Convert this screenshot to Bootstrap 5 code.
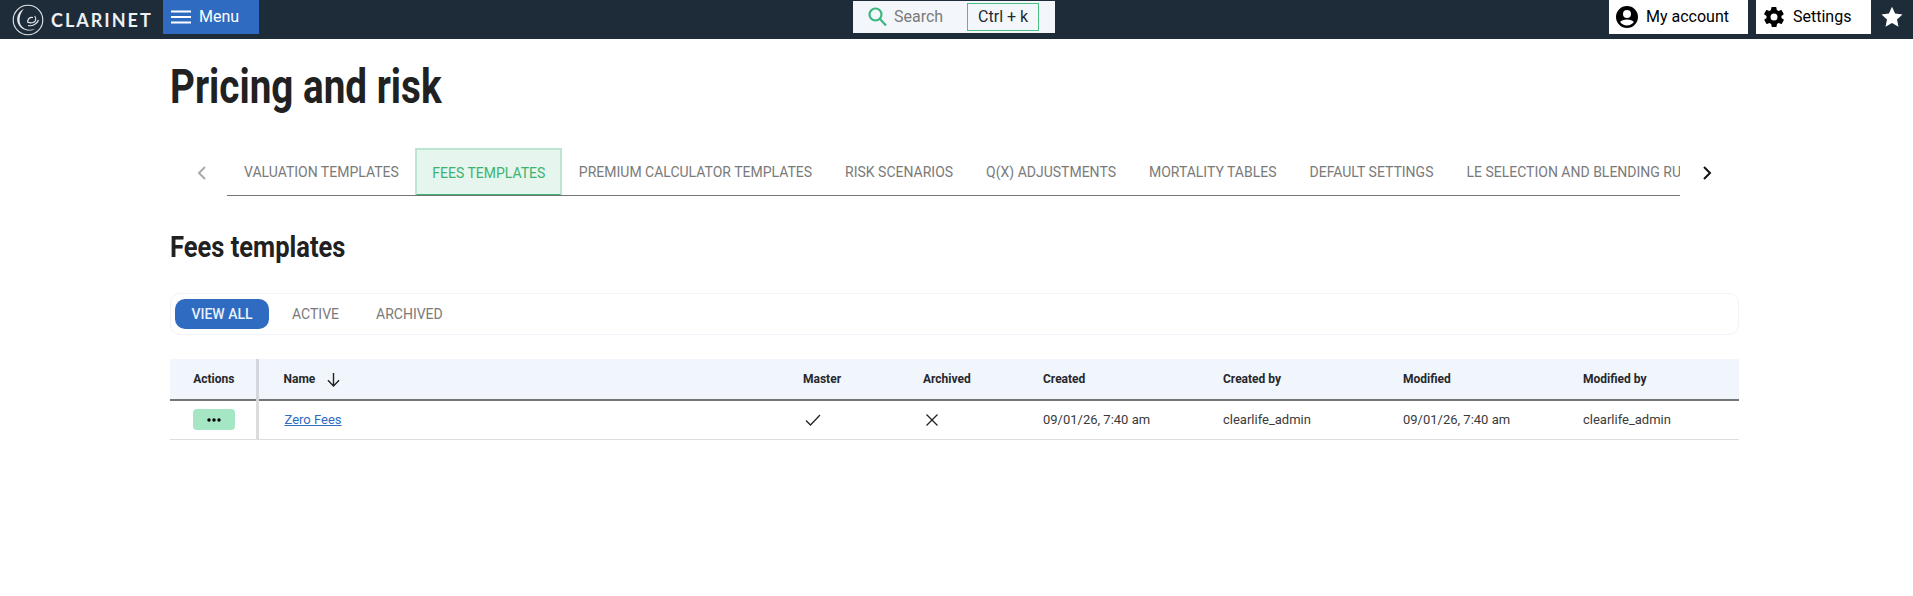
<!DOCTYPE html>
<html lang="en">
<head>
<meta charset="utf-8">
<title>Pricing and risk</title>
<link href="https://cdn.jsdelivr.net/npm/bootstrap@5.3.0/dist/css/bootstrap.min.css" rel="stylesheet">
<style>
body{font-family:Roboto,"Liberation Sans",sans-serif;background:#fff;color:#212121;overflow:hidden}
.topbar{height:39px;background:#1e2c3a}
.brand-box{width:163px;height:39px;padding-left:12px;color:#eef0f2}
.brand-word{font-family:Lato,"Liberation Sans",sans-serif;font-size:18px;font-weight:700;letter-spacing:2px;margin-left:7px;line-height:1}
.menu-btn{width:96px;height:34px;background:#2f6bc1;color:#fff;font-size:16px;padding:0 0 0 8px;border-radius:0;border:0;gap:8px}
.search-box{width:202px;height:32px;background:#f3f7fb;margin-left:594px;padding-left:15px;color:#7a7a7a;font-size:16px;margin-top:1px}
.search-word{margin-left:7px}
.kbd-box{width:72px;height:28px;border:1px solid #4cbf85;color:#212b36;font-size:16px;margin-left:24px}
.top-white{height:34px;background:#fff;color:#000;font-size:16px;padding-left:6px;border:0;border-radius:0;gap:7px}
.acct{width:139px}.sett{width:115px;margin-left:8px}
.star-wrap{width:42px;height:34px}
.main-wrap{padding:0 174px 0 170px}
.page-title{font-size:48px;font-weight:700;line-height:56px;margin:0;padding-top:20px;height:125px;transform:scaleX(.805);transform-origin:left top;white-space:nowrap;color:#212121}
.tabs-row{height:48px;margin-top:-16px}
.chev{width:57px;height:48px;padding-top:2px;padding-left:27px}
.chev-r{width:59px;height:48px;padding-left:22px;padding-top:2px}
.tab-strip{width:1453px;height:48px;overflow:hidden;border-bottom:1px solid #757575;flex-wrap:nowrap;padding-left:.5px}
.tab-one{height:47px;line-height:48px;padding:0 16.5px;font-size:14px;color:#7a7a7a;white-space:nowrap;text-decoration:none}
.tab-one.on{background:#e6f5ee;color:#3cb371;border:2px solid #bce6d0;border-bottom:2px solid #3cb371;padding:0 15px;height:48px;line-height:46px}
.sub-title{font-size:30px;font-weight:700;line-height:38px;margin:32px 0 0;transform:scaleX(.85);transform-origin:left top;white-space:nowrap}
.filter-bar{height:42px;border:1px solid #f0f3f9;border-radius:10px;margin-top:27px;padding-left:4px}
.pill-on{width:94px;height:30px;line-height:30px;background:#2f6bc1;color:#e8f0fb;border-radius:10px;font-size:14px;font-weight:500;text-align:center}
.pill-off{font-size:14px;color:#7a7a7a;margin-left:23px}
.pill-off + .pill-off{margin-left:37px}
.grid-t{table-layout:fixed;width:1569px;margin:24px 0 0;border-collapse:collapse}
.grid-t th{background:#f1f5fc;height:41px;font-size:12px;font-weight:700;color:#25282c;padding:0;border-bottom:2px solid #757575;vertical-align:middle}
.grid-t td{height:39px;font-size:13px;color:#3a3a3a;padding:0;border-bottom:1px solid #dedede;vertical-align:middle}
.grid-t .cell-act{text-align:center;border-right:3px solid #d3d6df;padding-left:2px}
.grid-t td.cell-act{border-right-color:#dcdcdc}
.grid-t .cell-name{padding-left:25px}
.act-btn{width:42px;height:21px;background:#a5e6c5;border-radius:4px;border:0;padding:0;line-height:1;vertical-align:middle}
.rec-link{color:#2f6bc1;margin-left:1px}
.mark-ic{margin-left:2px;margin-bottom:2px}
</style>
</head>
<body>
<nav class="topbar d-flex align-items-start">
  <div class="brand-box d-flex align-items-center">
    <svg width="32" height="32" viewBox="0 0 32 32" fill="none" stroke="#e4e7ea">
      <circle cx="16" cy="16" r="14.8" stroke-width="1.100"/>
      <path d="M12 5C6 7.500 3.800 14 6 19.500c2.800 6.500 11 9 17 5.500-6 1.800-12 .5-14.500-4.500C6.500 15.500 8 9 12 5z" fill="#e4e7ea" stroke="none"/>
      <path d="M21 13.500c-3-.5-5 1.500-5.500 4.500 3 1.500 7 1 8-1.500.6-1.800 0-3.500-.8-4.500" stroke-width="1.200"/>
      <path d="M16 21.500c4 1 9-1 10.500-5.500" stroke-width="1.200"/>
    </svg>
    <span class="brand-word">CLARINET</span>
  </div>
  <button class="menu-btn d-flex align-items-center" type="button">
    <svg width="20" height="14" viewBox="0 0 20 14"><path d="M0 1.500h20M0 7h20M0 12.500h20" stroke="#fff" stroke-width="2"/></svg>
    <span>Menu</span>
  </button>
  <div class="flex-grow-1 d-flex">
    <div class="search-box d-flex align-items-center">
      <svg width="19" height="20" viewBox="0 0 19 20" fill="none" stroke="#3cb67f" stroke-width="2.200"><circle cx="7.500" cy="7.500" r="6"/><path d="M12 12l6 6.500"/></svg>
      <span class="search-word">Search</span>
      <span class="kbd-box d-flex align-items-center justify-content-center">Ctrl + k</span>
    </div>
  </div>
  <button class="top-white acct d-flex align-items-center" type="button">
    <svg width="24" height="24" viewBox="0 0 24 24"><path d="M12 1a11 11 0 1 0 0 22 11 11 0 0 0 0-22zm0 4a4 4 0 1 1 0 8 4 4 0 0 1 0-8zm0 15.500c-2.800 0-5.300-1.300-6.900-3.400 1-1.700 4-2.600 6.900-2.600s5.900.9 6.900 2.600A8.700 8.700 0 0 1 12 20.500z" fill="#000"/></svg>
    <span>My account</span>
  </button>
  <button class="top-white sett d-flex align-items-center" type="button">
    <svg width="24" height="24" viewBox="0 0 24 24"><path fill="#000" d="M19.400 13c.1-.3.100-.7.100-1s0-.7-.1-1l2.100-1.600c.2-.2.200-.4.100-.6l-2-3.500c-.1-.2-.4-.3-.6-.2l-2.500 1c-.5-.4-1.100-.7-1.700-1l-.4-2.600c0-.3-.2-.5-.5-.5h-4c-.3 0-.5.200-.5.400l-.4 2.700c-.6.300-1.200.6-1.700 1l-2.500-1c-.2-.1-.5 0-.6.200l-2 3.500c-.1.200-.1.400.1.600L4.600 11c-.1.300-.1.700-.1 1s0 .7.100 1l-2.100 1.600c-.2.200-.2.400-.1.600l2 3.500c.1.200.4.300.6.200l2.500-1c.5.400 1.100.7 1.700 1l.4 2.600c0 .3.200.5.500.5h4c.3 0 .5-.2.500-.4l.4-2.700c.6-.3 1.200-.6 1.700-1l2.500 1c.2.100.5 0 .6-.2l2-3.500c.1-.2.100-.4-.1-.6L19.400 13zM12 15.500a3.500 3.500 0 1 1 0-7 3.500 3.500 0 0 1 0 7z"/></svg>
    <span>Settings</span>
  </button>
  <div class="star-wrap d-flex align-items-center justify-content-center">
    <svg width="24" height="24" viewBox="0 0 24 24"><path fill="#fff" d="M12 1.800l3.100 6.800 7.400.8-5.500 5 1.500 7.300L12 18.100l-6.500 3.600L7 14.400l-5.500-5 7.400-.8z"/></svg>
  </div>
</nav>

<main class="main-wrap">
  <h1 class="page-title">Pricing and risk</h1>
  <div class="tabs-row d-flex">
    <div class="chev d-flex align-items-center">
      <svg width="10" height="16" viewBox="0 0 10 16" fill="none" stroke="#aaa" stroke-width="2"><path d="M8 2L2 8l6 6"/></svg>
    </div>
    <div class="tab-strip d-flex">
      <a class="tab-one" href="#">VALUATION TEMPLATES</a>
      <a class="tab-one on" href="#">FEES TEMPLATES</a>
      <a class="tab-one" href="#">PREMIUM CALCULATOR TEMPLATES</a>
      <a class="tab-one" href="#">RISK SCENARIOS</a>
      <a class="tab-one" href="#">Q(X) ADJUSTMENTS</a>
      <a class="tab-one" href="#">MORTALITY TABLES</a>
      <a class="tab-one" href="#">DEFAULT SETTINGS</a>
      <a class="tab-one" href="#">LE SELECTION AND BLENDING RULES</a>
    </div>
    <div class="chev-r d-flex align-items-center">
      <svg width="10" height="16" viewBox="0 0 10 16" fill="none" stroke="#111" stroke-width="2"><path d="M2 2l6 6-6 6"/></svg>
    </div>
  </div>
  <h2 class="sub-title">Fees templates</h2>
  <div class="filter-bar d-flex align-items-center">
    <span class="pill-on">VIEW ALL</span>
    <span class="pill-off">ACTIVE</span>
    <span class="pill-off">ARCHIVED</span>
  </div>
  <table class="grid-t">
    <colgroup><col style="width:87px"><col style="width:546px"><col style="width:120px"><col style="width:120px"><col style="width:180px"><col style="width:180px"><col style="width:180px"><col style="width:156px"></colgroup>
    <thead>
      <tr>
        <th class="cell-act">Actions</th>
        <th class="cell-name">Name <svg class="ms-2" width="15" height="15" viewBox="0 0 14 14" fill="none" stroke="#222" stroke-width="1.300"><path d="M7 1v12M1.800 7.800L7 13l5.200-5.200"/></svg></th>
        <th>Master</th><th>Archived</th><th>Created</th><th>Created by</th><th>Modified</th><th>Modified by</th>
      </tr>
    </thead>
    <tbody>
      <tr>
        <td class="cell-act"><button class="act-btn" type="button"><svg width="14" height="4" viewBox="0 0 14 4" class="d-block mx-auto"><circle cx="2" cy="2" r="1.700"/><circle cx="7" cy="2" r="1.700"/><circle cx="12" cy="2" r="1.700"/></svg></button></td>
        <td class="cell-name"><a class="rec-link" href="#">Zero Fees</a></td>
        <td><svg class="mark-ic" width="16" height="12" viewBox="0 0 16 12" fill="none" stroke="#222" stroke-width="1.300"><path d="M1 6.500L5.500 11 15 1"/></svg></td>
        <td><svg class="mark-ic" width="14" height="14" viewBox="0 0 14 14" fill="none" stroke="#222" stroke-width="1.300"><path d="M1.500 1.500l11 11M12.500 1.500l-11 11"/></svg></td>
        <td>09/01/26, 7:40 am</td><td>clearlife_admin</td><td>09/01/26, 7:40 am</td><td>clearlife_admin</td>
      </tr>
    </tbody>
  </table>
</main>
</body>
</html>
